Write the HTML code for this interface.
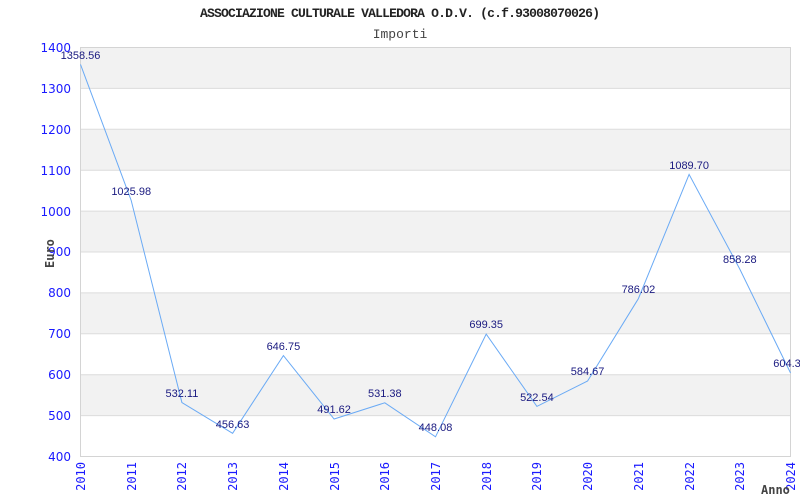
<!DOCTYPE html>
<html><head><meta charset="utf-8"><style>html,body{margin:0;padding:0;background:#fff}svg{display:block}</style></head>
<body>
<svg width="800" height="500" xmlns="http://www.w3.org/2000/svg">
<rect width="800" height="500" fill="#fff"/>
<g fill="#f2f2f2">
<rect x="80.5" y="47.5" width="710" height="40.9"/>
<rect x="80.5" y="129.3" width="710" height="40.9"/>
<rect x="80.5" y="211.1" width="710" height="40.9"/>
<rect x="80.5" y="292.9" width="710" height="40.9"/>
<rect x="80.5" y="374.7" width="710" height="40.9"/>
</g>
<g stroke="#dcdcdc" stroke-width="1">
<line x1="80" y1="88.4" x2="791" y2="88.4"/><line x1="80" y1="129.3" x2="791" y2="129.3"/>
<line x1="80" y1="170.2" x2="791" y2="170.2"/><line x1="80" y1="211.1" x2="791" y2="211.1"/>
<line x1="80" y1="252" x2="791" y2="252"/><line x1="80" y1="292.9" x2="791" y2="292.9"/>
<line x1="80" y1="333.8" x2="791" y2="333.8"/><line x1="80" y1="374.7" x2="791" y2="374.7"/>
<line x1="80" y1="415.6" x2="791" y2="415.6"/>
</g>
<rect x="80.5" y="47.5" width="710" height="409" fill="none" stroke="#d4d4d4"/>
<g font-family="Liberation Mono, monospace" font-size="13" text-anchor="middle">
<text x="400" y="17" font-weight="bold" fill="#222" textLength="400">ASSOCIAZIONE CULTURALE VALLEDORA O.D.V. (c.f.93008070026)</text>
<text x="400" y="38" fill="#444">Importi</text>
</g>
<g font-family="DejaVu Sans, sans-serif" font-size="12" fill="#1a1aff" text-anchor="end">
<text x="71" y="52">1400</text><text x="71" y="93">1300</text><text x="71" y="134">1200</text>
<text x="71" y="175">1100</text><text x="71" y="216">1000</text><text x="71" y="256">900</text>
<text x="71" y="297">800</text><text x="71" y="338">700</text><text x="71" y="379">600</text>
<text x="71" y="420">500</text><text x="71" y="461">400</text>
</g>
<g font-family="DejaVu Sans Mono, monospace" font-size="12" fill="#1a1aff" text-anchor="end">
<text transform="translate(85,462) rotate(-90)">2010</text>
<text transform="translate(136,462) rotate(-90)">2011</text>
<text transform="translate(186,462) rotate(-90)">2012</text>
<text transform="translate(237,462) rotate(-90)">2013</text>
<text transform="translate(288,462) rotate(-90)">2014</text>
<text transform="translate(339,462) rotate(-90)">2015</text>
<text transform="translate(389,462) rotate(-90)">2016</text>
<text transform="translate(440,462) rotate(-90)">2017</text>
<text transform="translate(491,462) rotate(-90)">2018</text>
<text transform="translate(541,462) rotate(-90)">2019</text>
<text transform="translate(592,462) rotate(-90)">2020</text>
<text transform="translate(643,462) rotate(-90)">2021</text>
<text transform="translate(694,462) rotate(-90)">2022</text>
<text transform="translate(744,462) rotate(-90)">2023</text>
<text transform="translate(795,462) rotate(-90)">2024</text>
</g>
<g font-family="DejaVu Sans Mono, monospace" font-size="12" font-weight="bold" fill="#444">
<text x="761" y="494">Anno</text>
<text transform="translate(54,268) rotate(-90)">Euro</text>
</g>
<polyline fill="none" stroke="#6aaaf5" stroke-width="1" points="80.5,64.4 131.2,200.5 181.9,402.5 232.6,433.3 283.4,355.6 334.1,419 384.8,402.8 435.5,436.8 486.2,334.1 536.9,406.4 587.6,381 638.4,298.6 689.1,174.4 739.8,269.1 790.5,372.9"/>
<g font-family="Liberation Sans, Arial, sans-serif" font-size="11" fill="#1a1a80" text-anchor="middle">
<text x="80.5" y="59">1358.56</text>
<text x="131.2" y="195">1025.98</text>
<text x="181.9" y="397">532.11</text>
<text x="232.6" y="428">456.63</text>
<text x="283.4" y="350">646.75</text>
<text x="334.1" y="413">491.62</text>
<text x="384.8" y="397">531.38</text>
<text x="435.5" y="431">448.08</text>
<text x="486.2" y="328">699.35</text>
<text x="536.9" y="401">522.54</text>
<text x="587.6" y="375">584.67</text>
<text x="638.4" y="293">786.02</text>
<text x="689.1" y="169">1089.70</text>
<text x="739.8" y="263">858.28</text>
<text x="787" y="367">604.3</text>
</g>
</svg>
</body></html>
